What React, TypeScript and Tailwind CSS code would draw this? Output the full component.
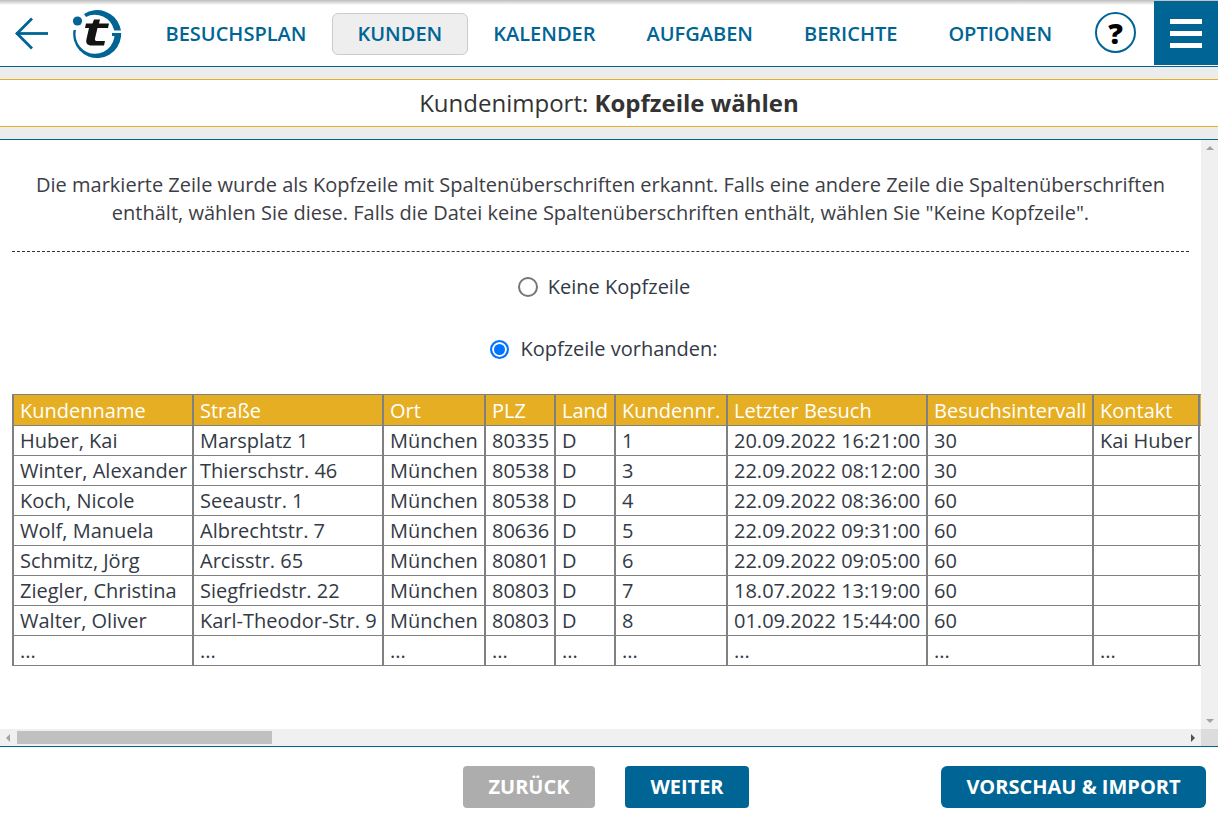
import React from 'react'

const navItems = ['BESUCHSPLAN', 'KUNDEN', 'KALENDER', 'AUFGABEN', 'BERICHTE', 'OPTIONEN']

const columns = [
  { title: 'Kundenname', width: 'w-[180px]' },
  { title: 'Straße', width: 'w-[190px]' },
  { title: 'Ort', width: 'w-[102px]' },
  { title: 'PLZ', width: 'w-[70px]' },
  { title: 'Land', width: 'w-[60px]' },
  { title: 'Kundennr.', width: 'w-[112px]' },
  { title: 'Letzter Besuch', width: 'w-[200px]' },
  { title: 'Besuchsintervall', width: 'w-[166px]' },
  { title: 'Kontakt', width: 'w-[106px]' },
  { title: '', width: 'w-[120px]' },
]

const rows = [
  ['Huber, Kai', 'Marsplatz 1', 'München', '80335', 'D', '1', '20.09.2022 16:21:00', '30', 'Kai Huber', ''],
  ['Winter, Alexander', 'Thierschstr. 46', 'München', '80538', 'D', '3', '22.09.2022 08:12:00', '30', '', ''],
  ['Koch, Nicole', 'Seeaustr. 1', 'München', '80538', 'D', '4', '22.09.2022 08:36:00', '60', '', ''],
  ['Wolf, Manuela', 'Albrechtstr. 7', 'München', '80636', 'D', '5', '22.09.2022 09:31:00', '60', '', ''],
  ['Schmitz, Jörg', 'Arcisstr. 65', 'München', '80801', 'D', '6', '22.09.2022 09:05:00', '60', '', ''],
  ['Ziegler, Christina', 'Siegfriedstr. 22', 'München', '80803', 'D', '7', '18.07.2022 13:19:00', '60', '', ''],
  ['Walter, Oliver', 'Karl-Theodor-Str. 9', 'München', '80803', 'D', '8', '01.09.2022 15:44:00', '60', '', ''],
  ['...', '...', '...', '...', '...', '...', '...', '...', '...', ''],
]

const Logo = () => (
  <svg width="50" height="50" viewBox="0 0 50 50" className="shrink-0">
    {/* ring gets thicker towards the right */}
    <path
      d="M12 5 A24 24 0 1 1 1.5 21 L4 21 A19.5 19.5 0 1 0 14 8 Z"
      fill="#006595"
    />
    <rect x="41" y="21.5" width="9" height="2.5" fill="#ffffff" />
    <rect x="40" y="24" width="9" height="3" fill="#006595" />
    <circle cx="5.5" cy="12" r="4.6" fill="#006595" />
    <path
      d="M14 14.5 L20.5 14.5 L22 10.5 L28 10.5 L27 14.5 L37 14.5 L36 19 L25.5 19 L23 29.5 C22.5 31.5 23.5 32 25.5 32 L33 32 L32 36.5 L20 36.5 C15 36.5 13.5 34 14.5 30 L17 19 L13 19 Z"
      fill="#141414"
    />
  </svg>
)

export default function App() {
  return (
    <div className="flex h-[824px] w-[1218px] flex-col overflow-hidden bg-white font-['Open_Sans',sans-serif] text-[#333a45]">
      {/* top nav */}
      <div className="relative flex h-[67px] shrink-0 items-center border-b border-[#006595] pl-[15px] pt-[1px]">
        <div className="absolute inset-x-0 top-0 h-[5px] bg-gradient-to-b from-[#bdbdbd] to-white" />
        <svg width="34" height="34" viewBox="0 0 34 34" className="shrink-0" fill="none" stroke="#006595" strokeWidth="2.8">
          <path d="M1 16.5 H33" />
          <path d="M17 1.5 L2 16.5 L17 31.5" />
        </svg>
        <div className="ml-[23px]">
          <Logo />
        </div>
        <div className="ml-[18px] flex items-center">
          {navItems.map((item) => (
            <div
              key={item}
              className={
                item === 'KUNDEN'
                  ? 'flex h-[42px] items-center rounded-md border border-[#c8cccc] bg-[#eeeeee] px-[24.5px] text-[20px] font-semibold text-[#006595]'
                  : 'px-[25.5px] text-[20px] font-semibold text-[#006595]'
              }
            >
              {item}
            </div>
          ))}
        </div>
        <div className="absolute right-[82px] top-[12px] flex h-[41px] w-[41px] items-center justify-center rounded-full border-2 border-[#006595] text-[29px] font-extrabold text-black">
          ?
        </div>
        <div className="absolute right-0 top-[1px] flex h-[64px] w-[64px] flex-col items-center justify-center gap-[7px] bg-[#006595]">
          <div className="h-[5px] w-[32px] bg-white" />
          <div className="h-[5px] w-[32px] bg-white" />
          <div className="h-[5px] w-[32px] bg-white" />
        </div>
      </div>

      {/* title */}
      <div className="h-[12px] shrink-0 bg-[#ececec]" />
      <div className="flex h-[48px] shrink-0 items-center justify-center border-y border-[#e6ae22] text-[24px] text-[#333333]">
        Kundenimport:&nbsp;<b className="font-bold">Kopfzeile wählen</b>
      </div>
      <div className="h-[12px] shrink-0 bg-[#ececec]" />
      <div className="h-px shrink-0 bg-[#006595]" />

      {/* scrolling content */}
      <div className="relative h-[606px] shrink-0 overflow-hidden">
        <div className="mr-[17px] h-[589px] overflow-hidden pl-[12px]">
          <p className="w-[1177px] pt-[31px] text-center text-[20px] leading-[28px] text-[#3d3d45]">
            Die markierte Zeile wurde als Kopfzeile mit Spaltenüberschriften erkannt. Falls eine andere Zeile die Spaltenüberschriften enthält, wählen Sie diese. Falls die Datei keine Spaltenüberschriften enthält, wählen Sie "Keine Kopfzeile".
          </p>
          <div className="mt-[24px] w-[1177px] border-t border-dashed border-[#333333]" />
          <div className="w-[1177px] pl-[7px] text-[20px]">
            <label className="mt-[23px] flex h-[24px] items-center justify-center">
              <input type="radio" name="kopfzeile" className="mr-[10px] h-[20px] w-[20px] appearance-none rounded-full border-2 border-[#767676] bg-white" />
              Keine Kopfzeile
            </label>
            <label className="mt-[38px] flex h-[24px] items-center justify-center">
              <input type="radio" name="kopfzeile" defaultChecked className="mr-[11px] h-[19px] w-[19px] appearance-none rounded-full border-2 border-[#0075ff] bg-white checked:bg-[#0075ff] checked:shadow-[inset_0_0_0_2px_white]" />
              Kopfzeile vorhanden:
            </label>
          </div>
          <table className="mt-[33px] w-[1306px] table-fixed border-collapse text-[20px] leading-[28px]">
            <thead>
              <tr className="h-[31px] bg-[#e6ae22] text-left text-white">
                {columns.map((col) => (
                  <th key={col.title} className={`${col.width} overflow-hidden whitespace-nowrap border border-x-2 border-[#808080] pl-[6px] pr-0 pt-[1px] font-normal`}>
                    {col.title}
                  </th>
                ))}
              </tr>
            </thead>
            <tbody>
              {rows.map((row, i) => (
                <tr key={i} className="h-[30px]">
                  {row.map((cell, j) => (
                    <td key={j} className="overflow-hidden whitespace-nowrap border border-x-2 border-[#808080] pl-[6px] pr-0">
                      {cell}
                    </td>
                  ))}
                </tr>
              ))}
            </tbody>
          </table>
        </div>

        {/* vertical scrollbar */}
        <div className="absolute bottom-[17px] right-0 top-0 flex w-[17px] flex-col items-center justify-between bg-[#f0f0f0] py-[6px]">
          <div className="h-0 w-0 border-x-[4px] border-b-[4px] border-x-transparent border-b-[#a3a3a3]" />
          <div className="h-0 w-0 border-x-[4px] border-t-[4px] border-x-transparent border-t-[#a3a3a3]" />
        </div>
        {/* horizontal scrollbar */}
        <div className="absolute bottom-0 left-0 right-0 flex h-[17px] items-center bg-[#f0f0f0]">
          <div className="ml-[6px] h-0 w-0 border-y-[4px] border-r-[4px] border-y-transparent border-r-[#a3a3a3]" />
          <div className="ml-[7px] h-[13px] w-[255px] bg-[#c0c0c0]" />
          <div className="ml-auto mr-[23px] h-0 w-0 border-y-[4px] border-l-[4px] border-y-transparent border-l-[#505050]" />
          <div className="absolute bottom-0 right-0 h-[17px] w-[17px] bg-[#dcdcdc]" />
        </div>
      </div>

      {/* footer */}
      <div className="relative h-[78px] shrink-0 border-t border-[#006595]">
        <button className="absolute left-[463px] top-[19px] h-[42px] w-[132px] rounded-[4px] bg-[#adadad] text-[20px] font-bold text-white">ZURÜCK</button>
        <button className="absolute left-[625px] top-[19px] h-[42px] w-[124px] rounded-[4px] bg-[#006595] text-[20px] font-bold text-white">WEITER</button>
        <button className="absolute left-[941px] top-[19px] h-[42px] w-[265px] rounded-[6px] bg-[#006595] text-[20px] font-bold text-white">VORSCHAU &amp; IMPORT</button>
      </div>
    </div>
  )
}
